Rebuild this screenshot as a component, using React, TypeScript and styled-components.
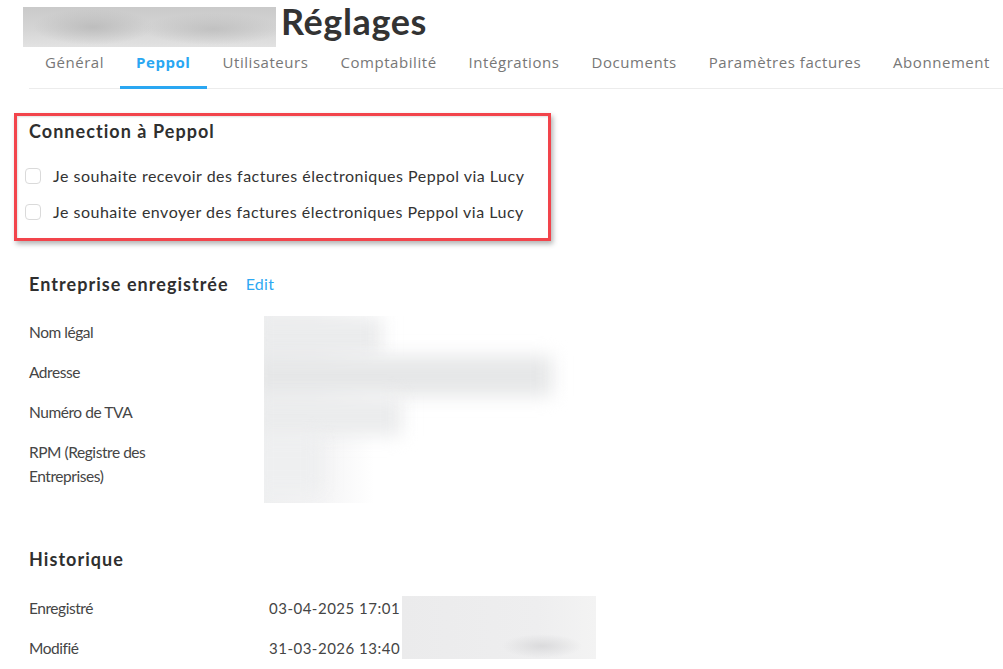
import React from "react";
import styled, { createGlobalStyle } from "styled-components";

const Global = createGlobalStyle`
  html, body { margin: 0; padding: 0; background: #fff; }
  body { font-family: Lato, "Open Sans", sans-serif; color: #333; }
  * { box-sizing: border-box; }
`;

const Page = styled.div`
  width: 1003px;
  height: 669px;
  overflow: hidden;
  padding-top: 7px;
`;

const Header = styled.div`
  display: flex;
  align-items: flex-start;
  gap: 5px;
  padding-left: 23px;
  height: 40px;
`;

const RedactedTitle = styled.div`
  width: 253px;
  height: 40px;
  flex: none;
  background:
    radial-gradient(ellipse 60px 18px at 70px 20px, rgba(180,180,180,0.7), transparent),
    radial-gradient(ellipse 70px 16px at 190px 22px, rgba(185,185,185,0.7), transparent),
    linear-gradient(180deg, #cacaca 0%, #d6d6d6 60%, #e2e2e2 100%);
`;

const Title = styled.h1`
  margin: -6px 0 0;
  font-family: Lato, sans-serif;
  font-weight: 700;
  font-size: 36px;
  letter-spacing: 0.6px;
  line-height: 40px;
  color: #333;
`;

const Tabs = styled.nav`
  display: flex;
  margin-left: 29px;
  border-bottom: 1px solid #ececec;
  height: 42px;
`;

const Tab = styled.div<{ $active?: boolean }>`
  padding: 4px 16px 0;
  font-family: "Open Sans", sans-serif;
  font-size: 15px;
  letter-spacing: 0.55px;
  line-height: 22px;
  color: ${(p) => (p.$active ? "#2aa7f2" : "#777")};
  font-weight: ${(p) => (p.$active ? 700 : 400)};
  border-bottom: 3px solid ${(p) => (p.$active ? "#2aa7f2" : "transparent")};
  margin-bottom: -1px;
  white-space: nowrap;
`;

const Content = styled.main`
  padding: 24px 0 0 14px;
`;

const HighlightBox = styled.section`
  width: 537px;
  border: 3px solid #f2444b;
  padding: 3px 8px 14px;
  box-shadow: 2px 3px 5px rgba(0, 0, 0, 0.3), inset 1px 1px 2px rgba(0, 0, 0, 0.12);
`;

const SectionTitle = styled.h2<{ $indent?: number }>`
  margin: 0;
  font-size: 18px;
  font-weight: 700;
  letter-spacing: 1.05px;
  line-height: 24px;
  color: #2f2f2f;
  padding-left: ${(p) => p.$indent ?? 0}px;
  display: flex;
  align-items: center;
  gap: 17px;
`;

const EditLink = styled.a`
  font-size: 16px;
  font-weight: 400;
  letter-spacing: 0.3px;
  color: #2ea8f3;
  text-decoration: none;
`;

const CheckList = styled.div`
  margin-top: 21px;
  display: flex;
  flex-direction: column;
  gap: 12px;
`;

const CheckRow = styled.label`
  display: flex;
  align-items: center;
  gap: 12px;
  font-size: 16px;
  letter-spacing: 0.5px;
  line-height: 24px;
  color: #333;
`;

const Box = styled.span`
  width: 16px;
  height: 16px;
  border: 1px solid #dadada;
  border-radius: 4px;
  background: #fff;
  flex: none;
`;

const Section = styled.section<{ $top: number }>`
  margin-top: ${(p) => p.$top}px;
  padding-left: 15px;
`;

const InfoGrid = styled.div<{ $cols: string; $top: number }>`
  margin-top: ${(p) => p.$top}px;
  display: grid;
  grid-template-columns: ${(p) => p.$cols};
  grid-auto-rows: auto;
`;

const Label = styled.div`
  padding: 8px 0;
  font-size: 15.5px;
  letter-spacing: -0.45px;
  line-height: 24px;
  color: #454545;
  width: 150px;
`;

const Value = styled.div`
  padding: 8px 0;
  font-size: 15px;
  letter-spacing: 0.5px;
  line-height: 24px;
  color: #454545;
  white-space: nowrap;
`;

const CompanyBlur = styled.div`
  grid-column: 2;
  grid-row: 1 / span 4;
  margin-top: 4px;
  margin-bottom: -7px;
  overflow: hidden;
  background: linear-gradient(90deg, #eff0f1 0, #f3f3f4 50px, rgba(255, 255, 255, 0) 110px);
`;

const BlurStack = styled.div`
  display: flex;
  flex-direction: column;
  margin-left: -12px;
`;

const BlurBar = styled.div<{ $w: number; $h: number; $tone: string }>`
  height: ${(p) => p.$h}px;
  width: ${(p) => p.$w}px;
  background: ${(p) => p.$tone};
  filter: blur(9px);
`;

const DateBlur = styled.div`
  grid-column: 3;
  grid-row: 1 / span 2;
  margin: 8px 0 9px;
  background:
    radial-gradient(ellipse 40px 12px at 140px 50px, rgba(210,210,212,0.7), transparent),
    linear-gradient(90deg, #ebebec 0%, #eeeeef 70%, #f3f3f3 100%);
`;

const tabs = [
  "Général",
  "Peppol",
  "Utilisateurs",
  "Comptabilité",
  "Intégrations",
  "Documents",
  "Paramètres factures",
  "Abonnement",
];

const companyRows = [
  "Nom légal",
  "Adresse",
  "Numéro de TVA",
  "RPM (Registre des Entreprises)",
];

const blurBars = [
  { w: 130, h: 40, tone: "#ebeced" },
  { w: 300, h: 40, tone: "#e6e7e8" },
  { w: 150, h: 40, tone: "#ebeced" },
  { w: 70, h: 56, tone: "#eeeff0" },
];

export default function App() {
  return (
    <Page>
      <Global />
      <Header>
        <RedactedTitle />
        <Title>Réglages</Title>
      </Header>
      <Tabs>
        {tabs.map((t) => (
          <Tab key={t} $active={t === "Peppol"}>
            {t}
          </Tab>
        ))}
      </Tabs>
      <Content>
        <HighlightBox>
          <SectionTitle $indent={4}>Connection à Peppol</SectionTitle>
          <CheckList>
            <CheckRow>
              <Box />
              Je souhaite recevoir des factures électroniques Peppol via Lucy
            </CheckRow>
            <CheckRow>
              <Box />
              Je souhaite envoyer des factures électroniques Peppol via Lucy
            </CheckRow>
          </CheckList>
        </HighlightBox>

        <Section $top={31}>
          <SectionTitle>
            Entreprise enregistrée <EditLink href="#">Edit</EditLink>
          </SectionTitle>
          <InfoGrid $cols="235px 1fr" $top={16}>
            {companyRows.map((label, i) => (
              <Label key={label} style={{ gridRow: i + 1 }}>
                {label}
              </Label>
            ))}
            <CompanyBlur>
              <BlurStack>
                {blurBars.map((b, i) => (
                  <BlurBar key={i} $w={b.w} $h={b.h} $tone={b.tone} />
                ))}
              </BlurStack>
            </CompanyBlur>
          </InfoGrid>
        </Section>

        <Section $top={51}>
          <SectionTitle>Historique</SectionTitle>
          <InfoGrid $cols="240px 133px 194px" $top={17}>
            <Label>Enregistré</Label>
            <Value>03-04-2025 17:01</Value>
            <DateBlur />
            <Label>Modifié</Label>
            <Value>31-03-2026 13:40</Value>
          </InfoGrid>
        </Section>
      </Content>
    </Page>
  );
}
